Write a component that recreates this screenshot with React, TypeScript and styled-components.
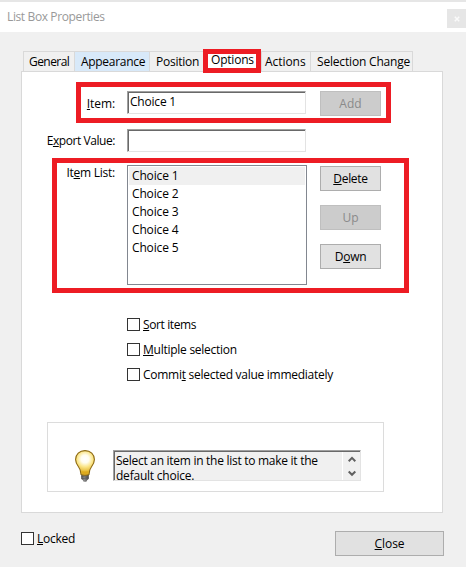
import React from "react";
import styled, { createGlobalStyle } from "styled-components";

const GlobalStyle = createGlobalStyle`
  *, *::before, *::after { box-sizing: border-box; }
  body { margin: 0; background: #f0f0f0; }
`;

const Dialog = styled.div`
  display: flex;
  flex-direction: column;
  width: 466px;
  height: 567px;
  overflow: hidden;
  background: #f0f0f0;
  color: #000;
  font: 12px/17px "Open Sans", "Noto Sans", sans-serif;
  white-space: nowrap;
`;

const Label = styled.span<{ $track?: number }>`
  letter-spacing: ${(p) => p.$track ?? 0}px;
`;

const Mnemonic = styled.span`
  text-decoration: underline;
  text-decoration-thickness: 1px;
  text-underline-offset: 1px;
  text-decoration-skip-ink: none;
`;

const TitleBar = styled.header`
  display: flex;
  justify-content: space-between;
  flex: none;
  height: 32px;
  padding: 6px 0 0 7px;
  border-top: 2px solid #e6e6e6;
  background: #fff;
  color: #999;
`;

const WindowClose = styled.button`
  display: flex;
  align-items: center;
  justify-content: center;
  width: 19px;
  height: 19px;
  margin-top: 1px;
  padding: 0;
  border: 0;
  background: #e6e6e6;
`;

const TabStrip = styled.nav`
  display: flex;
  flex: none;
  height: 20px;
  margin: 19px 0 0 23px;
`;

const Tab = styled.div<{ $width: number; $inset?: number; $hot?: boolean }>`
  width: ${(p) => p.$width}px;
  padding: 1px 0 0 ${(p) => p.$inset ?? 6}px;
  border-top: 1px solid #d9d9d9;
  border-left: 1px solid #d9d9d9;
  background: ${(p) => (p.$hot ? "#d8e9f9" : "#f0f0f0")};

  &:last-child { border-right: 1px solid #d9d9d9; }
`;

const ActiveTab = styled.div`
  position: relative;
  z-index: 1;
  width: 58px;
  height: 22px;
  margin-top: -2px;
  padding: 2px 0 0 8px;
  background: #fff;
`;

const Panel = styled.main`
  flex: none;
  display: flex;
  flex-direction: column;
  width: 422px;
  height: 442px;
  margin-left: 21px;
  padding-top: 19px;
  border: 1px solid #d9d9d9;
  background: #fff;
`;

const Highlight = styled.div<{ $top: number; $left: number; $width: number; $height: number }>`
  position: absolute;
  top: ${(p) => p.$top}px;
  left: ${(p) => p.$left}px;
  width: ${(p) => p.$width}px;
  height: ${(p) => p.$height}px;
  border: 5px solid #ed1c24;
  pointer-events: none;
`;

const Field = styled.div<{ $height: number }>`
  position: relative;
  display: flex;
  align-items: flex-start;
  height: ${(p) => p.$height}px;
  margin-bottom: 13px;
`;

const Caption = styled.div<{ $drop: number }>`
  width: 93px;
  margin: ${(p) => p.$drop}px 12px 0 0;
  text-align: right;
`;

const sunken = `
  border: 1px solid #e3e3e3;
  border-top-color: #a0a0a0;
  border-left-color: #a0a0a0;
  box-shadow: inset 1px 1px 0 #696969;
`;

const TextBox = styled.div`
  width: 179px;
  height: 23px;
  margin-right: 14px;
  padding: 1px 0 0 2px;
  background: #fff;
  ${sunken}
`;

const ListBox = styled.ul`
  width: 180px;
  height: 120px;
  margin: 0 13px 0 0;
  padding: 1px;
  border: 1px solid #828790;
  list-style: none;
`;

const ListItem = styled.li<{ $selected?: boolean }>`
  height: 18px;
  padding-left: 3px;
  background: ${(p) => (p.$selected ? "#f0f0f0" : "#fff")};
`;

const ButtonColumn = styled.div`
  display: flex;
  flex-direction: column;
  gap: 14px;
  padding-top: 1px;
`;

const Button = styled.button<{ $width?: number }>`
  width: ${(p) => p.$width ?? 61}px;
  height: 25px;
  padding: 3px 0;
  border: 1px solid #adadad;
  background: #e1e1e1;
  color: #000;
  font: inherit;
  text-align: center;

  &:disabled {
    border-color: #bfbfbf;
    background: #ccc;
    color: #8a8a8a;
  }
`;

const Checks = styled.div`
  display: flex;
  flex-direction: column;
  gap: 8px;
  margin: 18px 0 0 105px;
`;

const Check = styled.label`
  display: flex;
  gap: 3px;
  height: 17px;
`;

const CheckMark = styled.span`
  width: 13px;
  height: 13px;
  margin-top: 2px;
  border: 1px solid #333;
  background: #fff;
`;

const HintFrame = styled.section`
  display: flex;
  align-items: flex-start;
  width: 337px;
  height: 70px;
  margin: 39px 0 0 25px;
  padding: 27px 0 0 27px;
  border: 1px solid #dcdcdc;
`;

const HintBox = styled.div`
  display: flex;
  justify-content: space-between;
  width: 248px;
  height: 31px;
  margin-left: 18px;
  background: #f0f0f0;
  line-height: 15px;
  ${sunken}
`;

const HintText = styled.div`
  display: flex;
  flex-direction: column;
  padding: 2px 0 0 2px;
`;

const Spinner = styled.div`
  display: flex;
  flex-direction: column;
  justify-content: space-between;
  align-items: center;
  width: 18px;
  margin-top: 1px;
  padding: 4px 0 3px;
  border-left: 1px solid #fff;
`;

const Footer = styled.footer`
  display: flex;
  justify-content: space-between;
  align-items: flex-start;
  padding: 18px 22px 0 21px;
`;

const FooterCheck = styled.div`
  margin-top: -1px;
`;

const Bulb = () => (
  <svg width="20" height="32" viewBox="0 0 20 32">
    <defs>
      <radialGradient id="glow" cx="10" cy="9" r="13" gradientUnits="userSpaceOnUse">
        <stop offset="0" stopColor="#fff" />
        <stop offset=".3" stopColor="#fffdf0" />
        <stop offset=".6" stopColor="#fbe68a" />
        <stop offset="1" stopColor="#e3b52b" />
      </radialGradient>
      <linearGradient id="cap" x1="0" x2="1">
        <stop offset="0" stopColor="#4d4d4d" />
        <stop offset=".4" stopColor="#8c8c8c" />
        <stop offset="1" stopColor="#484848" />
      </linearGradient>
    </defs>
    <path d="M6.2 24.5h7.6v4.2l-1.7 1.5-.8 1.6H8.7l-.8-1.6-1.7-1.5z" fill="url(#cap)" />
    <path d="M6.5 26.5l7-1M6.5 28.7l7-1" stroke="#555" strokeWidth=".7" />
    <path
      d="M10 .6C4.5.6.6 4.5.6 9.6c0 3.4 1.4 5.4 3 7.4 1.7 2.1 2.4 3.7 2.4 7.5 1.5.9 6.5.9 8 0 0-3.8.7-5.4 2.4-7.5 1.6-2 3-4 3-7.4C19.4 4.5 15.5.6 10 .6z"
      fill="url(#glow)"
      stroke="#8b6813"
      strokeWidth="1.1"
    />
    <path d="M7.2 23.7c1.6.5 4 .5 5.6 0v-2.5c-1.6.4-4 .4-5.6 0z" fill="#dda91c" />
  </svg>
);

const Arrow = ({ down }: { down?: boolean }) => (
  <svg width="8" height="7" viewBox="0 0 8 7">
    <path d={down ? "M.7 1.5L4 4.8l3.3-3.3" : "M.7 5.2L4 1.9l3.3 3.3"} fill="none" stroke="#606060" strokeWidth="2" />
  </svg>
);

const choices = ["Choice 1", "Choice 2", "Choice 3", "Choice 4", "Choice 5"];

export default function App() {
  return (
    <>
      <GlobalStyle />
      <Dialog>
        <TitleBar>
          <Label $track={-0.38}>List Box Properties</Label>
          <WindowClose aria-label="Close window">
            <svg width="6" height="6" viewBox="0 0 6 6">
              <path d="M.8.8l4.4 4.4M5.2.8L.8 5.2" stroke="#fafafa" strokeWidth="1.5" />
            </svg>
          </WindowClose>
        </TitleBar>
        <TabStrip>
          <Tab $width={51} $inset={5}><Label $track={-0.55}>General</Label></Tab>
          <Tab $width={75} $hot><Label $track={-0.3}>Appearance</Label></Tab>
          <Tab $width={54}><Label $track={-0.25}>Position</Label></Tab>
          <ActiveTab>
            <Label $track={-0.2}>Options</Label>
            <Highlight $top={0} $left={0} $width={58} $height={24} />
          </ActiveTab>
          <Tab $width={49} $inset={3}><Label $track={-0.05}>Actions</Label></Tab>
          <Tab $width={103}><Label $track={-0.18}>Selection Change</Label></Tab>
        </TabStrip>
        <Panel>
          <Field $height={25}>
            <Caption $drop={4}>
              <Label $track={-0.1}><Mnemonic>I</Mnemonic>tem:</Label>
            </Caption>
            <TextBox><Label $track={-0.2}>Choice 1</Label></TextBox>
            <Button disabled><Label>Add</Label></Button>
            <Highlight $top={-9} $left={54} $width={315} $height={41} />
          </Field>
          <Field $height={23}>
            <Caption $drop={3}>
              <Label $track={-0.43}>E<Mnemonic>x</Mnemonic>port Value:</Label>
            </Caption>
            <TextBox />
          </Field>
          <Field $height={120}>
            <Caption $drop={-1}>
              <Label $track={-0.25}>It<Mnemonic>e</Mnemonic>m List:</Label>
            </Caption>
            <ListBox>
              {choices.map((choice, index) => (
                <ListItem key={choice} $selected={index === 0}>
                  <Label $track={-0.15}>{choice}</Label>
                </ListItem>
              ))}
            </ListBox>
            <ButtonColumn>
              <Button><Label $track={-0.3}><Mnemonic>D</Mnemonic>elete</Label></Button>
              <Button disabled><Label>Up</Label></Button>
              <Button><Label $track={-0.25}>D<Mnemonic>o</Mnemonic>wn</Label></Button>
            </ButtonColumn>
            <Highlight $top={-7} $left={30} $width={357} $height={135} />
          </Field>
          <Checks>
            <Check><CheckMark /><Label $track={-0.38}><Mnemonic>S</Mnemonic>ort items</Label></Check>
            <Check><CheckMark /><Label $track={-0.26}><Mnemonic>M</Mnemonic>ultiple selection</Label></Check>
            <Check><CheckMark /><Label $track={-0.27}>Commi<Mnemonic>t</Mnemonic> selected value immediately</Label></Check>
          </Checks>
          <HintFrame>
            <Bulb />
            <HintBox>
              <HintText>
                <Label $track={-0.28}>Select an item in the list to make it the</Label>
                <Label $track={-0.22}>default choice.</Label>
              </HintText>
              <Spinner><Arrow /><Arrow down /></Spinner>
            </HintBox>
          </HintFrame>
        </Panel>
        <Footer>
          <FooterCheck>
            <Check><CheckMark /><Label $track={-0.25}><Mnemonic>L</Mnemonic>ocked</Label></Check>
          </FooterCheck>
          <Button $width={109}><Label $track={-0.1}><Mnemonic>C</Mnemonic>lose</Label></Button>
        </Footer>
      </Dialog>
    </>
  );
}
